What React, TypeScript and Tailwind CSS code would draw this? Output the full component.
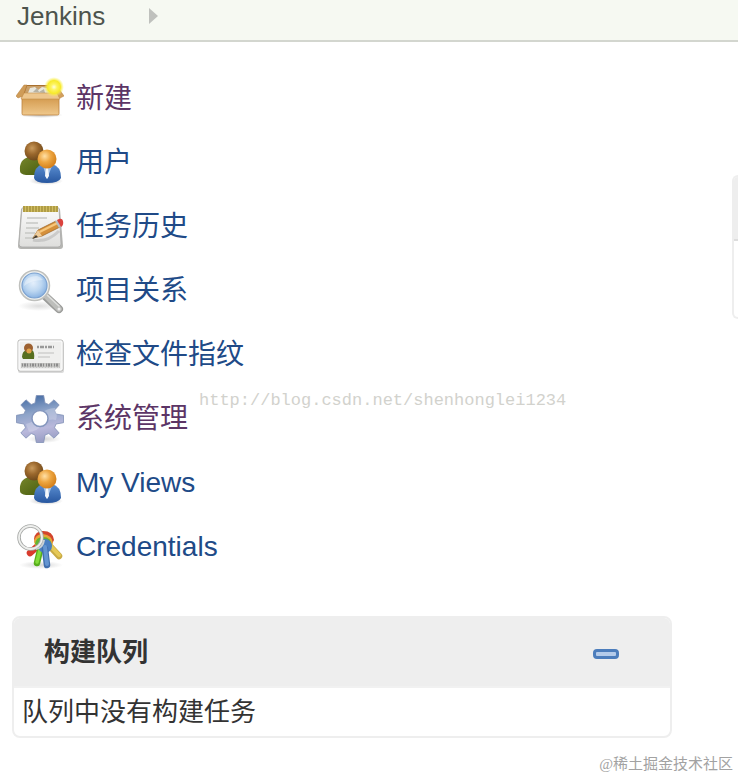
import type { ReactNode } from "react";

function Icon({ children }: { children: ReactNode }) {
  return (
    <svg viewBox="0 0 48 48" className="size-12 shrink-0" aria-hidden="true">
      {children}
    </svg>
  );
}

function BoxIcon() {
  return (
    <Icon>
      <defs>
        <linearGradient id="boxFront" x1="0" y1="0" x2="0" y2="1">
          <stop offset="0" stopColor="#c98f43" />
          <stop offset="0.3" stopColor="#d9a35a" />
          <stop offset="1" stopColor="#efc88c" />
        </linearGradient>
        <radialGradient id="boxStar">
          <stop offset="0" stopColor="#fffde0" />
          <stop offset="0.3" stopColor="#fdf460" />
          <stop offset="0.65" stopColor="#f7ea2c" />
          <stop offset="1" stopColor="#fbf36a" stopOpacity="0" />
        </radialGradient>
        <radialGradient id="softShadow">
          <stop offset="0" stopColor="#555" stopOpacity="0.4" />
          <stop offset="1" stopColor="#555" stopOpacity="0" />
        </radialGradient>
      </defs>
      <ellipse cx="25" cy="40" rx="22" ry="3" fill="url(#softShadow)" />
      <path d="M10 10h29l4 11H6z" fill="#a8702f" />
      <path d="M11 11h27l2 9H8z" fill="#c9a06a" />
      <path d="M12 18l2-5 5-1 3 3 4-3 5 1 4 5z" fill="#e8e6dc" />
      <path d="M17 17l4-4 2 4 5-3 1 4z" fill="#b7b3a5" />
      <path d="M6 20h37v18.500q0 1.500-1.500 1.500h-34Q6 40 6 38.500z" fill="url(#boxFront)" stroke="#bd8440" strokeWidth="0.800" />
      <path d="M8 10l3 0-4 11-5 2-2-2z" fill="#cf9c58" stroke="#b57c38" strokeWidth="0.500" />
      <path d="M41 11l7 10-4 2-5-4z" fill="#d3a05c" stroke="#b57c38" strokeWidth="0.500" />
      <path d="M8 18h33l3 6H5z" fill="#edc68d" stroke="#c58d47" strokeWidth="0.600" />
      <circle cx="38" cy="12" r="10" fill="url(#boxStar)" />
    </Icon>
  );
}

function UsersIcon() {
  return (
    <Icon>
      <defs>
        <radialGradient id="headBrown" cx="0.4" cy="0.35" r="0.650">
          <stop offset="0" stopColor="#c99a5c" />
          <stop offset="0.5" stopColor="#9a672c" />
          <stop offset="1" stopColor="#704a1d" />
        </radialGradient>
        <radialGradient id="headOrange" cx="0.38" cy="0.35" r="0.650">
          <stop offset="0" stopColor="#ffe0a6" />
          <stop offset="0.5" stopColor="#eda641" />
          <stop offset="1" stopColor="#d5811c" />
        </radialGradient>
        <linearGradient id="coatBlue" x1="0" y1="0" x2="0" y2="1">
          <stop offset="0" stopColor="#5b8fd2" />
          <stop offset="1" stopColor="#2857a0" />
        </linearGradient>
        <linearGradient id="coatGreen" x1="0" y1="0" x2="1" y2="1">
          <stop offset="0" stopColor="#77852b" />
          <stop offset="1" stopColor="#455b0c" />
        </linearGradient>
      </defs>
      <ellipse cx="30" cy="42" rx="17" ry="4" fill="url(#softShadow)" />
      <path d="M4 32q-1-12 9-14h10q6 3 6 18H10q-6-1-6-4z" fill="url(#coatGreen)" />
      <circle cx="18" cy="12" r="9.500" fill="url(#headBrown)" />
      <path d="M18 39q0-12 9-14h9q9 2 9 14-2 5-14 5t-13-5z" fill="url(#coatBlue)" />
      <path d="M27 27l4 13 5-13z" fill="#a9c4e6" />
      <path d="M30 29h2l1 8-2 3-2-3z" fill="#f5f8fb" />
      <circle cx="31" cy="20" r="9.500" fill="url(#headOrange)" />
    </Icon>
  );
}

function NotepadIcon() {
  return (
    <Icon>
      <defs>
        <linearGradient id="paper" x1="0" y1="0" x2="0" y2="1">
          <stop offset="0" stopColor="#fafafa" />
          <stop offset="1" stopColor="#dededc" />
        </linearGradient>
      </defs>
      <path d="M5 6h39l3 37q0 3-3 3H5q-3 0-3-3z" fill="#b5b5b2" />
      <path d="M6 5h37l2 36q0 3-3 3H6q-3 0-3-3z" fill="url(#paper)" stroke="#a9aaa8" strokeWidth="0.800" />
      <path d="M7 3h35v6H7z" fill="#d0bd62" />
      <path d="M8 3v6m3-6v6m3-6v6m3-6v6m3-6v6m3-6v6m3-6v6m3-6v6m3-6v6m3-6v6m3-6v6m3-6v6" stroke="#9c8732" strokeWidth="1.200" />
      <path d="M11 15h20M10 20h12M10 25h13M9 30h10M9 35h9" stroke="#c6c7c5" strokeWidth="1.500" />
      <path d="M17 37q14 3 26-9" fill="none" stroke="#999" strokeWidth="3" opacity="0.350" />
      <path d="M17 35l5-8 18-9 4 6-18 9z" fill="#d5903b" stroke="#99601f" strokeWidth="0.700" />
      <path d="M23 28l18-9 1 2-18 9z" fill="#f6c67b" />
      <path d="M17 35l5-8 4 6z" fill="#efcc9a" />
      <path d="M16 36l4-4 2 2z" fill="#443c31" />
      <path d="M39 18l3-1 4 6-3 2z" fill="#b9bfc3" />
      <path d="M41 17q5-3 6 1 1 4-2 6z" fill="#db423d" />
    </Icon>
  );
}

function SearchIcon() {
  return (
    <Icon>
      <defs>
        <radialGradient id="lens" cx="0.45" cy="0.4" r="0.6">
          <stop offset="0" stopColor="#e4effb" />
          <stop offset="0.55" stopColor="#bdd7f1" />
          <stop offset="1" stopColor="#8ab3e2" />
        </radialGradient>
      </defs>
      <ellipse cx="23" cy="39" rx="21" ry="5" fill="url(#softShadow)" opacity="0.500" />
      <path d="M29 29l14 13" stroke="#9a9b99" strokeWidth="8" strokeLinecap="round" />
      <path d="M30 29l13 13" stroke="#bdbebb" strokeWidth="5.500" strokeLinecap="round" />
      <path d="M31 28l12 11" stroke="#dedfdd" strokeWidth="1.500" strokeLinecap="round" />
      <circle cx="43" cy="42" r="1.500" fill="#eee" />
      <circle cx="18.500" cy="18.500" r="15" fill="#f0f1ef" stroke="#bfc0bd" strokeWidth="1.500" />
      <circle cx="18.500" cy="18.500" r="12.500" fill="url(#lens)" stroke="#7ba2d1" strokeWidth="1.200" />
      <path d="M8 19q1-10 13-10 4 1 6 4-12 0-19 6z" fill="#fff" opacity="0.350" />
    </Icon>
  );
}

function CardIcon() {
  return (
    <Icon>
      <rect x="2" y="11" width="46" height="31" rx="2" fill="#999" opacity="0.350" />
      <rect x="2" y="9" width="45" height="31" rx="2" fill="#efefee" stroke="#b5b5b3" />
      <rect x="3" y="10" width="43" height="29" rx="1" fill="none" stroke="#fff" />
      <path d="M6 26q0-6 5-7h5q3 2 2 9H7z" fill="#576f20" />
      <circle cx="12.500" cy="17" r="4.500" fill="#9c6030" />
      <circle cx="13" cy="20" r="2.500" fill="#e0a34b" />
      <path d="M21 16h17" stroke="#999" strokeWidth="2.500" strokeDasharray="2 1 4 1" />
      <path d="M22 22h16M22 26h12" stroke="#d0d0ce" strokeWidth="1.300" />
      <path d="M5 32h39v5H5z" fill="#c4c4c2" />
      <path d="M6 34h37" stroke="#8c8c8c" strokeWidth="3" strokeDasharray="1 1 2 1 1 2" />
      <path d="M6 37h37" stroke="#eee" strokeDasharray="2 1" />
    </Icon>
  );
}

function GearIcon() {
  return (
    <Icon>
      <defs>
        <linearGradient id="gearFill" x1="0.4" y1="0" x2="0.600" y2="1">
          <stop offset="0" stopColor="#496fa6" />
          <stop offset="0.35" stopColor="#8ea4c9" />
          <stop offset="0.7" stopColor="#b9b8db" />
          <stop offset="1" stopColor="#969bc2" />
        </linearGradient>
      </defs>
      <ellipse cx="28" cy="44" rx="17" ry="4" fill="url(#softShadow)" opacity="0.600" />
      <path
        d="M19 8L20.300 .5H27.700L29 8 32.800 9.500 38 4.800 43.200 10 38.500 15.200 40 19 47.500 20.300V27.700L40 29 38.500 32.800 43.200 38 38 43.200 32.800 38.500 29 40 27.700 47.500H20.300L19 40 15.200 38.500 10 43.200 4.800 38 9.500 32.800 8 29 .5 27.700V20.300L8 19 9.500 15.200 4.800 10 10 4.800 15.200 9.500z"
        fill="url(#gearFill)"
        stroke="#8090b6"
        strokeWidth="0.800"
        strokeLinejoin="round"
      />
      <path d="M10 29q8-2 14-9t15-7q3 6 1 12-8-2-14 5t-13 7z" fill="#dfe3f2" opacity="0.350" />
      <circle cx="24" cy="23.500" r="8" fill="#fff" stroke="#8496bd" strokeWidth="1.500" />
    </Icon>
  );
}

function KeysIcon() {
  return (
    <Icon>
      <ellipse cx="25" cy="42" rx="22" ry="4" fill="url(#softShadow)" opacity="0.600" />
      <g fill="none" strokeLinecap="round">
        <path d="M30 19l13 14" stroke="#c9ab45" strokeWidth="6.500" />
        <path d="M30 18l13 14" stroke="#e6c957" strokeWidth="4" />
        <path d="M24 21L14 30" stroke="#d93b2d" strokeWidth="6.500" />
        <path d="M25 23l-4 17" stroke="#57ae1c" strokeWidth="6.500" />
        <path d="M25 23l-4 16" stroke="#83dc3a" strokeWidth="3.500" />
      </g>
      <path d="M18 16q1-8 9-8 10 0 11 9l-4 8H21z" fill="#d3442c" />
      <path d="M18 19q1-8 9-8 9 1 10 9l-5 6H21z" fill="#e6a637" />
      <path d="M19 21q1-7 8-7 8 0 9 9l-8 4z" fill="#63b534" />
      <circle cx="29" cy="23" r="7" fill="#4a7fc2" />
      <path d="M29 26l2 16" stroke="#416fae" strokeWidth="6.500" strokeLinecap="round" />
      <path d="M29 24l2 17" stroke="#6495d1" strokeWidth="4" strokeLinecap="round" />
      <circle cx="14.500" cy="14.500" r="11.500" fill="none" stroke="#a6a8a6" strokeWidth="3.500" />
      <circle cx="14.500" cy="14.500" r="11.500" fill="none" stroke="#eeefed" strokeWidth="1.800" />
      <path d="M20 26q7-1 8-9" fill="none" stroke="#c9d0d4" strokeWidth="2" />
    </Icon>
  );
}

const tasks = [
  { label: "新建", icon: <BoxIcon />, visited: true },
  { label: "用户", icon: <UsersIcon />, visited: false },
  { label: "任务历史", icon: <NotepadIcon />, visited: false },
  { label: "项目关系", icon: <SearchIcon />, visited: false },
  { label: "检查文件指纹", icon: <CardIcon />, visited: false },
  { label: "系统管理", icon: <GearIcon />, visited: true },
  { label: "My Views", icon: <UsersIcon />, visited: false },
  { label: "Credentials", icon: <KeysIcon />, visited: false },
];

export default function App() {
  return (
    <div className="relative min-h-screen overflow-hidden bg-white font-['Liberation_Sans','Noto_Sans_CJK_SC',sans-serif] text-[#333]">
      <nav aria-label="Breadcrumb" className="flex h-[42px] items-start gap-11 border-b-2 border-[#d3d6cf] bg-[#f6f9f2] px-[17px]">
        <a href="#jenkins" className="text-[26px] leading-8 text-[#4d544d]">
          Jenkins
        </a>
        <svg viewBox="0 0 9 16" className="mt-2 h-4 w-[9px]" aria-hidden="true">
          <path d="M0 0l9 8-9 8z" fill="#bfc1bd" />
        </svg>
      </nav>

      <div className="flex gap-[60px]">
        <aside className="min-w-0 flex-1 pt-[25px] pl-3">
          <ul className="pl-1">
            {tasks.map((task) => (
              <li key={task.label} className="h-16">
                <a
                  href="#task"
                  className={
                    task.visited
                      ? "flex h-full items-center gap-3 text-[28px] leading-10 text-[#5c3566]"
                      : "flex h-full items-center gap-3 text-[28px] leading-10 text-[#204a87]"
                  }
                >
                  {task.icon}
                  <span>{task.label}</span>
                </a>
              </li>
            ))}
          </ul>

          <section className="mt-[37px] overflow-hidden rounded-lg border-2 border-[#eee]">
            <header className="flex h-[70px] items-center justify-between border-b-2 border-[#f1f1f1] bg-[#eee] pr-[51px] pl-[30px]">
              <h2 className="text-[26px] leading-10 font-bold">构建队列</h2>
              <button type="button" aria-label="收起" className="flex h-8 items-center pt-1">
                <span className="block h-[10px] w-[26px] rounded-sm border-3 border-[#4c7dbc] bg-[#b4cbea]" />
              </button>
            </header>
            <p className="px-2 pt-1 pb-1 text-[26px] leading-10">队列中没有构建任务</p>
          </section>
        </aside>

        <main className="mt-[133px] h-36 w-1.5 rounded-l-lg border-2 border-r-0 border-[#eee]">
          <div className="h-16 rounded-tl-md border-b-2 border-[#ddd] bg-[#eee]" />
        </main>
      </div>

      <p className="pointer-events-none absolute top-[389px] left-[199px] font-['Liberation_Mono',monospace] text-[17px] leading-6 text-[#d2d2cd]">
        http://blog.csdn.net/shenhonglei1234
      </p>
      <p className="pointer-events-none absolute right-[5px] bottom-[2px] font-['Liberation_Serif','Noto_Sans_CJK_SC',serif] text-[15px] leading-6 text-[#a2a2a2]">
        @稀土掘金技术社区
      </p>
    </div>
  );
}
